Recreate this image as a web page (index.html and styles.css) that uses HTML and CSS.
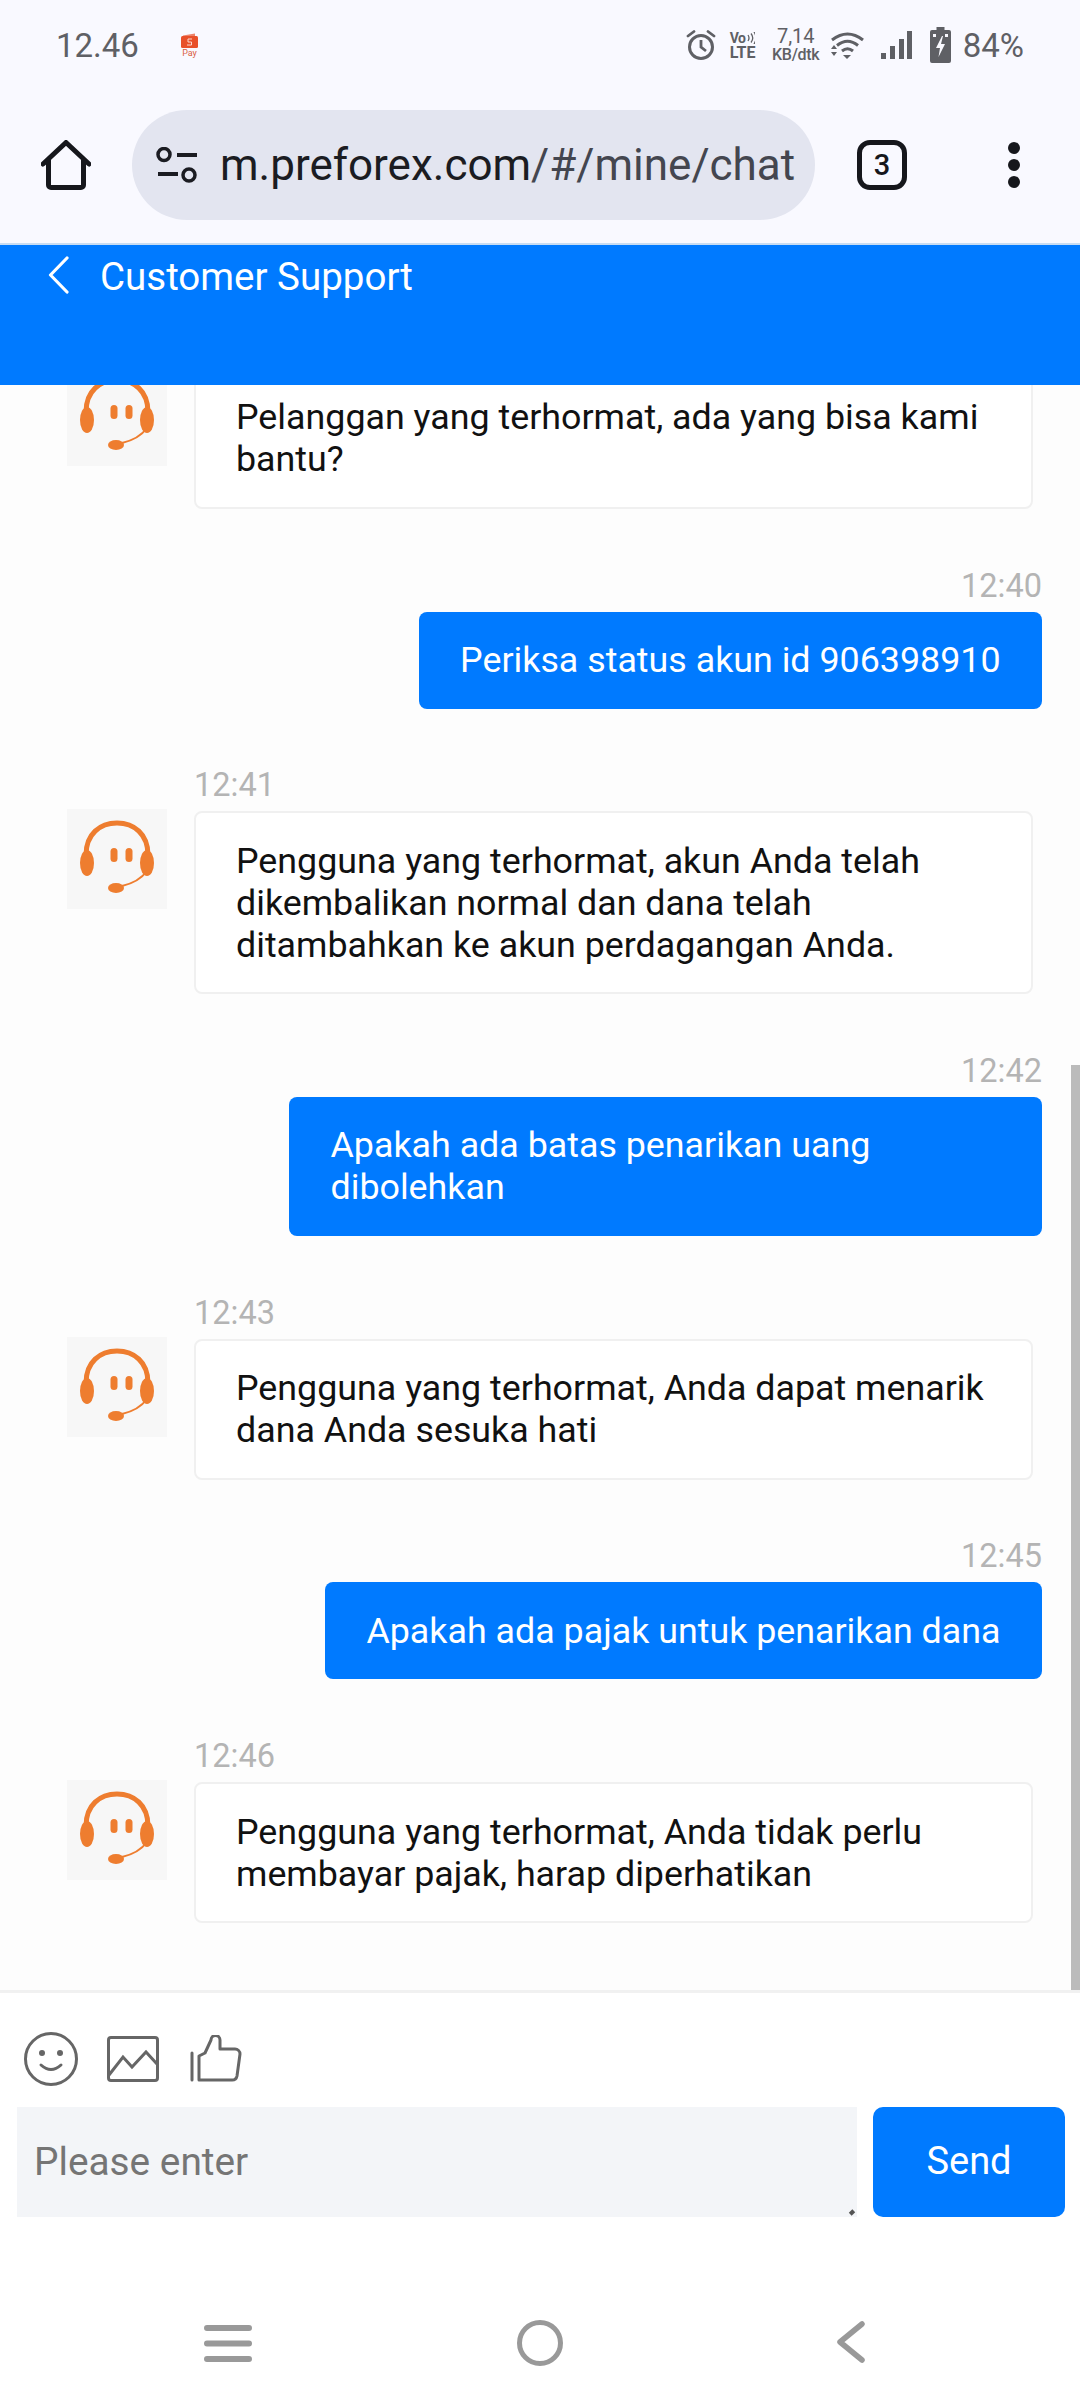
FILE: index.html
```html
<!DOCTYPE html>
<html lang="id">
<head>
<meta charset="utf-8">
<title>Customer Support</title>
<link rel="stylesheet" href="styles.css">
</head>
<body>
<div class="screen">
  <header class="chrome">
    <div class="status">
      <span class="clock">12.46</span>
      <span class="spay"><svg class="spay-icon" viewBox="0 0 17 15"><path d="M2 2.500 14 0.500V3H2Z" fill="#e8502a" opacity=".7"/><rect y="3" width="17" height="12" rx="1.500" fill="#e8502a"/><path d="M11 6H7v3h3.500v3H6" fill="none" stroke="#fbd9ce" stroke-width="1"/></svg><span class="spay-text">Pay</span></span>
      <span class="status-space"></span>
      <svg class="ic-alarm" viewBox="0 0 30 30"><circle cx="15" cy="17" r="11.500" fill="none" stroke="#5f6065" stroke-width="3"/><path d="M15 10v7l5 4" fill="none" stroke="#5f6065" stroke-width="2.800"/><path d="M2 6 8 1.500M28 6 22 1.500" stroke="#5f6065" stroke-width="2.800" stroke-linecap="round"/></svg>
      <span class="volte"><span class="vo">Vo<svg class="vo-waves" viewBox="0 0 8 12"><path d="M1 3q2 3 0 6M4 1.500q3.500 4.500 0 9M7 0q4 6 0 12" fill="none" stroke="#5f6065" stroke-width="1.300"/></svg></span><span class="lte">LTE</span></span>
      <span class="speed"><span class="speed-num">7,14</span><span class="speed-unit">KB/dtk</span></span>
      <svg class="ic-wifi" viewBox="0 0 33 28"><path d="M1 9Q16.500-3 32 9M6 14.500Q16.500 6 27 14.500M11 20Q16.500 15.500 22 20" fill="none" stroke="#5f6065" stroke-width="3"/><path d="M12 24h8l-4 4ZM0 18h6l-3-4ZM0 21h6l-3 4Z" fill="#5f6065"/></svg>
      <svg class="ic-signal" viewBox="0 0 31 28"><rect x="0" y="22" width="5" height="6" fill="#5f6065"/><rect x="9" y="15" width="5" height="13" fill="#5f6065"/><rect x="18" y="8" width="5" height="20" fill="#5f6065"/><rect x="26" y="0" width="5" height="28" fill="#5f6065"/></svg>
      <svg class="ic-battery" viewBox="0 0 21 36"><path d="M6.500 0h8v3h4.500a2 2 0 0 1 2 2v29a2 2 0 0 1-2 2H2a2 2 0 0 1-2-2V5a2 2 0 0 1 2-2h4.500Z" fill="#5f6065"/><path d="M12 9 6 21h4l-1.500 9L15 17h-4l2-8Z" fill="#f9f9ff"/><rect x="3" y="7" width="3" height="3" fill="#f9f9ff"/><rect x="15" y="7" width="3" height="3" fill="#f9f9ff"/></svg>
      <span class="pct">84%</span>
    </div>
    <div class="toolbar">
      <svg class="ic-home" viewBox="0 0 50 50"><path d="M2 24 25 2.500 48 24M7.500 20V45a2.500 2.500 0 0 0 2.500 2.500H40a2.500 2.500 0 0 0 2.500-2.500V20" fill="none" stroke="#16171c" stroke-width="5" stroke-linejoin="round" stroke-linecap="round"/></svg>
      <div class="omnibox">
        <svg class="ic-tune" viewBox="0 0 42 36"><circle cx="8" cy="7.500" r="6" fill="none" stroke="#1b1c22" stroke-width="3.500"/><path d="M21 8h20M2 27h20" stroke="#1b1c22" stroke-width="4"/><circle cx="33" cy="28" r="6" fill="none" stroke="#1b1c22" stroke-width="3.500"/></svg>
        <span class="url"><span class="host">m.preforex.com</span>/#/mine/chat</span>
      </div>
      <span class="tabs">3</span>
      <span class="menu"><i></i><i></i><i></i></span>
    </div>
  </header>

  <div class="topbar">
    <svg class="ic-back" viewBox="0 0 21 38"><path d="M19 2 2.500 19 19 36" fill="none" stroke="#fff" stroke-width="3.200" stroke-linecap="round" stroke-linejoin="round"/></svg>
    <span class="title">Customer Support</span>
  </div>

  <main class="chat">
    <div class="msg msg-in">
      <div class="msg-row">
        <svg class="avatar" viewBox="0 0 100 100"><use href="#agent"/></svg>
        <div class="bubble">Pelanggan yang terhormat, ada yang bisa kami bantu?</div>
      </div>
    </div>
    <div class="msg msg-out">
      <time class="stamp">12:40</time>
      <div class="bubble">Periksa status akun id 906398910</div>
    </div>
    <div class="msg msg-in">
      <time class="stamp">12:41</time>
      <div class="msg-row">
        <svg class="avatar" viewBox="0 0 100 100"><use href="#agent"/></svg>
        <div class="bubble">Pengguna yang terhormat, akun Anda telah dikembalikan normal dan dana telah ditambahkan ke akun perdagangan Anda.</div>
      </div>
    </div>
    <div class="msg msg-out">
      <time class="stamp">12:42</time>
      <div class="bubble">Apakah ada batas penarikan uang dibolehkan</div>
    </div>
    <div class="msg msg-in">
      <time class="stamp">12:43</time>
      <div class="msg-row">
        <svg class="avatar" viewBox="0 0 100 100"><use href="#agent"/></svg>
        <div class="bubble">Pengguna yang terhormat, Anda dapat menarik dana Anda sesuka hati</div>
      </div>
    </div>
    <div class="msg msg-out">
      <time class="stamp">12:45</time>
      <div class="bubble">Apakah ada pajak untuk penarikan dana</div>
    </div>
    <div class="msg msg-in">
      <time class="stamp">12:46</time>
      <div class="msg-row">
        <svg class="avatar" viewBox="0 0 100 100"><use href="#agent"/></svg>
        <div class="bubble">Pengguna yang terhormat, Anda tidak perlu membayar pajak, harap diperhatikan</div>
      </div>
    </div>
    <div class="scrollbar"></div>
  </main>

  <footer class="composer">
    <div class="tools">
      <svg class="ic-smile" viewBox="0 0 54 54"><circle cx="27" cy="27" r="25.500" fill="none" stroke="#666" stroke-width="3"/><circle cx="18" cy="21" r="3" fill="#666"/><circle cx="36" cy="21" r="3" fill="#666"/><path d="M17 33q10 9 20 0" fill="none" stroke="#666" stroke-width="3" stroke-linecap="round"/></svg>
      <svg class="ic-image" viewBox="0 0 52 46"><rect x="1.500" y="1.500" width="49" height="43" rx="2.500" fill="none" stroke="#666" stroke-width="3"/><path d="M2 39 16 21l9 10 14-15 11 12" fill="none" stroke="#666" stroke-width="3"/></svg>
      <svg class="ic-thumb" viewBox="0 0 52 47"><path d="M2 18V45" fill="none" stroke="#666" stroke-width="3" stroke-linecap="round"/><path d="M9 45V21l6-3 6-13a4.500 4.500 0 0 1 9 0v9h15a5 5 0 0 1 5 5l-3 22a5 5 0 0 1-5 4Z" fill="none" stroke="#666" stroke-width="3" stroke-linejoin="round"/></svg>
    </div>
    <div class="entry">
      <div class="field">Please enter<i class="grip"></i></div>
      <div class="send">Send</div>
    </div>
  </footer>

  <nav class="navbar">
    <svg class="ic-recent" viewBox="0 0 48 37"><path d="M3 3H45M3 18.500H45M3 34H45" stroke="#999" stroke-width="6" stroke-linecap="round"/></svg>
    <svg class="ic-circle" viewBox="0 0 46 46"><circle cx="23" cy="23" r="20.500" fill="none" stroke="#999" stroke-width="5"/></svg>
    <svg class="ic-nav-back" viewBox="0 0 30 42"><path d="M26 3 4 21l22 18" fill="none" stroke="#999" stroke-width="5.500" stroke-linecap="round" stroke-linejoin="round"/></svg>
  </nav>
</div>

<svg class="defs" width="0" height="0">
  <defs>
    <g id="agent">
      <rect width="100" height="100" fill="#f7f7f7"/>
      <path d="M19 46C19 25 33 14 50 14S81 25 81 46" fill="none" stroke="#ee7d2f" stroke-width="5"/>
      <ellipse cx="20" cy="54" rx="7" ry="13" fill="#ee7d2f"/>
      <ellipse cx="80" cy="54" rx="7" ry="13" fill="#ee7d2f"/>
      <rect x="43.500" y="39" width="7" height="14" rx="3.500" fill="#ee7d2f"/>
      <rect x="58.500" y="39" width="7" height="14" rx="3.500" fill="#ee7d2f"/>
      <ellipse cx="49" cy="79" rx="8" ry="5" fill="#ee7d2f"/>
      <path d="M55 77Q72 73 80 62" fill="none" stroke="#ee7d2f" stroke-width="2"/>
    </g>
  </defs>
</svg>
</body>
</html>
```
FILE: styles.css
```css
* { box-sizing: border-box; }
html, body { margin: 0; padding: 0; }
body { font-family: Roboto, "Liberation Sans", sans-serif; background: #fff; }
.defs { position: absolute; }
svg { display: block; flex: none; }

.screen { width: 1080px; height: 2400px; display: flex; flex-direction: column; overflow: hidden; background: #fff; }

/* browser chrome */
.chrome { height: 245px; flex: none; background: #f9f9ff; border-bottom: 2px solid #c8dcf2; }
.status { height: 90px; padding: 0 56px; display: flex; align-items: center; color: #5f6065; }
.clock { font-size: 33px; width: 125px; }
.spay { display: flex; flex-direction: column; align-items: center; width: 17px; }
.spay-icon { width: 17px; height: 17px; }
.spay-text { font-size: 9px; line-height: 9px; color: #d9603f; }
.status-space { flex: 1; }
.ic-alarm { width: 30px; height: 30px; margin-right: 14px; }
.volte { display: flex; flex-direction: column; gap: 1px; width: 30px; margin-right: 11px; font-weight: 700; line-height: 13px; }
.vo { font-size: 14px; display: flex; align-items: center; letter-spacing: -.5px; }
.vo-waves { width: 8px; height: 12px; margin-left: 2px; }
.lte { font-size: 16px; }
.speed { display: flex; flex-direction: column; align-items: center; width: 50px; margin-right: 10px; }
.speed-num { font-size: 20px; line-height: 19px; }
.speed-unit { font-size: 16px; line-height: 17px; font-weight: 500; letter-spacing: -.3px; white-space: nowrap; }
.ic-wifi { width: 33px; height: 28px; margin-right: 17px; }
.ic-signal { width: 31px; height: 28px; margin-right: 18px; }
.ic-battery { width: 21px; height: 36px; margin-right: 12px; }
.pct { font-size: 33px; }

.toolbar { height: 110px; margin-top: 20px; padding: 0 0 0 41px; display: flex; align-items: center; }
.ic-home { width: 50px; height: 50px; }
.omnibox { width: 683px; height: 110px; margin-left: 41px; border-radius: 55px; background: #e3e5f0; display: flex; align-items: center; padding-left: 24px; }
.ic-tune { width: 42px; height: 36px; }
.url { margin-left: 22px; font-size: 44px; color: #44464f; white-space: nowrap; }
.host { color: #1b1c22; }
.tabs { width: 50px; height: 50px; margin-left: 42px; border: 5px solid #16171c; border-radius: 13px; display: flex; align-items: center; justify-content: center; font-size: 29px; font-weight: 500; color: #16171c; }
.menu { margin-left: 101px; display: flex; flex-direction: column; gap: 5px; }
.menu i { width: 12px; height: 12px; border-radius: 50%; background: #16171c; }

/* blue title bar */
.topbar { height: 140px; flex: none; padding: 9px 0 0 48px; display: flex; align-items: flex-start; background: #007aff; color: #fff; }
.ic-back { width: 21px; height: 38px; margin-top: 2px; }
.title { margin-left: 31px; font-size: 38.500px; line-height: 46px; }

/* conversation */
.chat { flex: none; height: 1605px; padding: 0 38px 67px 67px; display: flex; flex-direction: column; justify-content: flex-end; overflow: hidden; position: relative; background: #fdfdfd; }
.msg { flex: none; display: flex; flex-direction: column; margin-top: 60.700px; }
.msg:first-child { margin-top: 0; }
.stamp { display: block; height: 42px; font-size: 32.500px; line-height: 32px; color: #b4b4b4; }
.msg-in .stamp { margin-left: 127px; }
.msg-out { align-items: flex-end; }
.msg-row { display: flex; gap: 27px; }
.avatar { width: 100px; height: 100px; margin-top: -2px; }
.msg-row .bubble { width: 839px; flex: none; }
.bubble { padding: 27.500px 41.500px; font-size: 35.800px; line-height: 42px; color: #111; background: #fff; border: 2px solid #f0f0f0; border-radius: 8px; }
.msg-in .bubble { padding: 26.500px 40px; }
.msg-out .bubble { max-width: 753px; background: #007aff; border: 0; color: #fff; }
.scrollbar { position: absolute; right: 0; top: 680px; bottom: 0; width: 9px; background: #bbb; }

/* composer */
.composer { flex: none; height: 247px; border-top: 3px solid #f1f1f1; padding: 0 15px 0 17px; }
.tools { height: 114px; padding: 39px 0 0 7px; display: flex; align-items: flex-start; gap: 29px; }
.ic-smile { width: 54px; height: 54px; }
.ic-image { width: 52px; height: 46px; margin-top: 4px; }
.ic-thumb { width: 52px; height: 47px; margin: 3px 0 0 2px; }
.entry { display: flex; height: 110px; gap: 16px; }
.field { flex: 1; position: relative; padding: 0 0 2px 17px; display: flex; align-items: center; font-size: 38.800px; color: #757575; background: #f3f5f8; }
.grip { position: absolute; right: 3px; bottom: 2px; width: 4px; height: 5px; background: #555; transform: rotate(45deg); }
.send { width: 192px; padding-bottom: 2px; display: flex; align-items: center; justify-content: center; font-size: 38px; color: #fff; background: #007aff; border-radius: 10px; }

/* android nav */
.navbar { flex: 1; display: flex; align-items: flex-start; padding: 88px 0 0 204px; background: #fff; }
.ic-recent { width: 48px; height: 37px; }
.ic-circle { width: 46px; height: 46px; margin: -5px 0 0 265px; }
.ic-nav-back { width: 30px; height: 42px; margin: -4px 0 0 273px; }
```
